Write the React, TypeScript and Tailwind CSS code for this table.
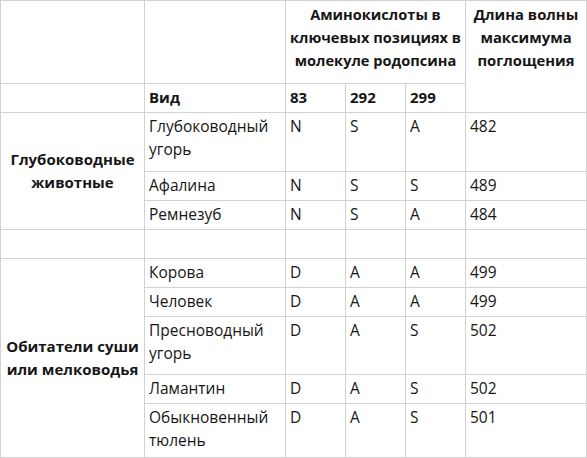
const deep = [
  { name: ["Глубоководный", "угорь"], a: "N", b: "S", c: "A", nm: "482" },
  { name: ["Афалина"], a: "N", b: "S", c: "S", nm: "489" },
  { name: ["Ремнезуб"], a: "N", b: "S", c: "A", nm: "484" },
];

const land = [
  { name: ["Корова"], a: "D", b: "A", c: "A", nm: "499" },
  { name: ["Человек"], a: "D", b: "A", c: "A", nm: "499" },
  { name: ["Пресноводный", "угорь"], a: "D", b: "A", c: "S", nm: "502" },
  { name: ["Ламантин"], a: "D", b: "A", c: "S", nm: "502" },
  { name: ["Обыкновенный", "тюлень"], a: "D", b: "A", c: "S", nm: "501" },
];

const cell = "bg-white px-[4px] pt-[2px]";

function DataRow({ r }: { r: (typeof deep)[number] }) {
  return (
    <>
      <div className={cell}>
        {r.name.map((n) => (
          <div key={n}>{n}</div>
        ))}
      </div>
      <div className={cell}>{r.a}</div>
      <div className={cell}>{r.b}</div>
      <div className={cell}>{r.c}</div>
      <div className={cell}>{r.nm}</div>
    </>
  );
}

export default function App() {
  return (
    <div className="w-[587px] h-[458px] bg-white font-['Open_Sans',sans-serif] text-[15.5px] leading-[23px] text-[#161616]">
      <div className="grid h-full grid-cols-[143px_140px_59px_59px_59px_120px] grid-rows-[82px_28px_58px_28px_28px_28px_28px_28px_57px_28px_53px] gap-px bg-[#d2d2d2] p-px">
        {/* шапка */}
        <div className="bg-white" />
        <div className="bg-white" />
        <div className="col-span-3 bg-white pt-[2px] text-center text-[14.6px] font-bold">
          Аминокислоты в
          <br />
          ключевых позициях в
          <br />
          молекуле родопсина
        </div>
        <div className="row-span-2 bg-white pt-[2px] text-center text-[14.8px] font-bold">
          Длина волны
          <br />
          максимума
          <br />
          поглощения
        </div>
        <div className="bg-white" />
        <div className={`${cell} text-[15px] font-bold`}>Вид</div>
        <div className={`${cell} text-[15px] font-bold`}>83</div>
        <div className={`${cell} text-[15px] font-bold`}>292</div>
        <div className={`${cell} text-[15px] font-bold`}>299</div>

        {/* глубоководные */}
        <div className="row-span-3 flex items-center justify-center bg-white text-center text-[15px] font-bold">
          <div>
            Глубоководные
            <br />
            животные
          </div>
        </div>
        {deep.map((r) => (
          <DataRow key={r.name[0]} r={r} />
        ))}

        {/* пустая строка */}
        <div className="bg-white" />
        <div className="bg-white" />
        <div className="bg-white" />
        <div className="bg-white" />
        <div className="bg-white" />
        <div className="bg-white" />

        {/* суша и мелководье */}
        <div className="row-span-5 flex items-center justify-center bg-white text-center text-[15px] font-bold">
          <div>
            Обитатели суши
            <br />
            или мелководья
          </div>
        </div>
        {land.map((r) => (
          <DataRow key={r.name[0]} r={r} />
        ))}
      </div>
    </div>
  );
}
